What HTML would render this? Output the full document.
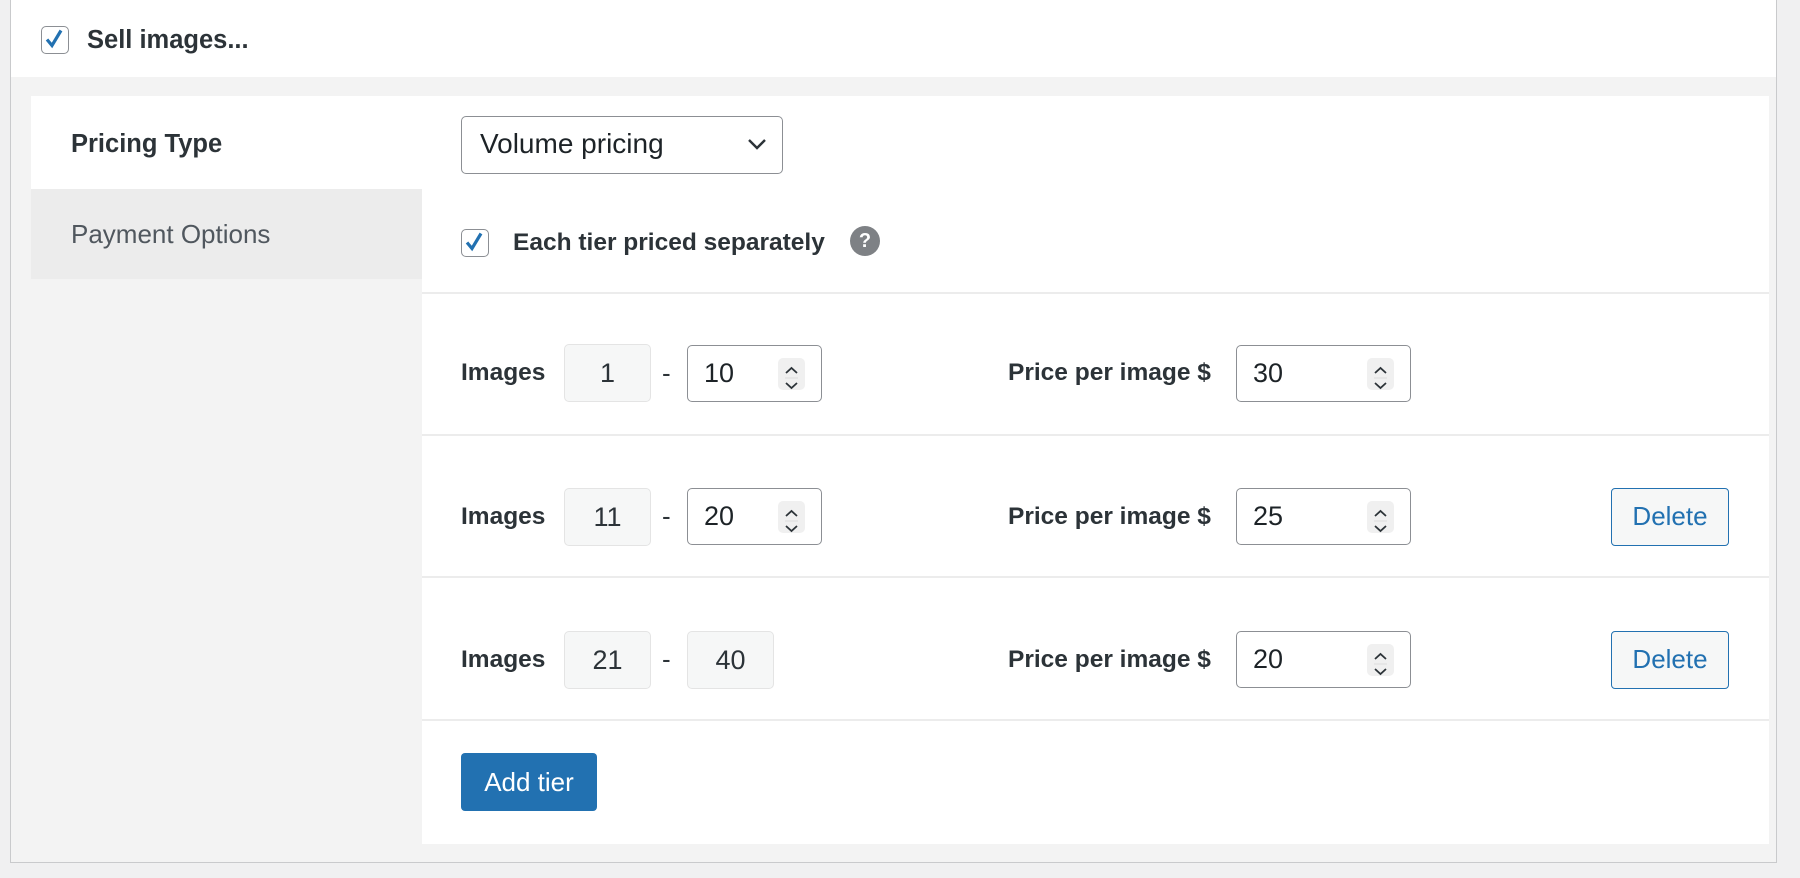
<!DOCTYPE html>
<html><head><meta charset="utf-8"><style>
body{margin:0;width:1800px;height:878px;background:#f0f0f1;position:relative;overflow:hidden;font-family:"Liberation Sans",Arial,sans-serif;color:#1d2327}
.a{position:absolute}
#outer{left:10px;top:0;width:1767px;height:863px;background:#f3f3f3;border:1px solid #c9cacc;border-top:none;box-sizing:border-box}
#hdr{left:11px;top:0;width:1765px;height:77px;background:#fff}
.cb{width:28px;height:28px;border:1.5px solid #8c8f94;border-radius:5px;box-sizing:border-box;background:#fff}
.lbl{font-weight:bold;font-size:24.5px;color:#2c3338;line-height:30px;white-space:nowrap}
.inp{border:1.5px solid #8c8f94;border-radius:5px;box-sizing:border-box;background:#fff;font-size:27px;line-height:54px;color:#1d2327}
.ro{border:1px solid #e4e4e4;border-radius:5px;box-sizing:border-box;background:#f6f7f7;font-size:27px;line-height:56px;text-align:center;color:#2c3338}
.sp{width:27px;height:32px;background:#f0f0f0;border-radius:5px}
.sep{left:422px;width:1347px;height:2px;background:#ececec}
.del{width:118px;height:58px;border:1.5px solid #2271b1;border-radius:4px;box-sizing:border-box;background:#f6f7f7;color:#2271b1;font-size:26px;line-height:55px;text-align:center}
</style></head><body>
<div class="a" id="outer"></div>
<div class="a" id="hdr"></div>
<div class="a cb" style="left:41px;top:26px"><svg width="26" height="26" viewBox="0 0 26 26" style="position:absolute;left:-1px;top:-1px"><path d="M6 13.5l5 6 9-15" fill="none" stroke="#2271b1" stroke-width="3.2"/></svg></div>
<div class="a lbl" style="left:87px;top:25px;font-size:25.5px">Sell images...</div>

<div class="a" style="left:31px;top:96px;width:1738px;height:748px;background:#fff"></div>
<div class="a" style="left:31px;top:189px;width:391px;height:655px;background:#f3f3f3"></div>
<div class="a" style="left:31px;top:189px;width:391px;height:90px;background:#ececec"></div>
<div class="a lbl" style="left:71px;top:129px;font-size:25.5px">Pricing Type</div>
<div class="a" style="left:71px;top:219px;font-size:26px;line-height:30px;color:#50575e">Payment Options</div>

<div class="a inp" style="left:461px;top:116px;width:322px;height:58px;padding-left:18px;font-size:28px">Volume pricing
<svg class="a" style="left:285px;top:20px" width="20" height="14" viewBox="0 0 20 14"><path d="M2 3l8 8 8-8" fill="none" stroke="#2c3338" stroke-width="2.4"/></svg></div>

<div class="a cb" style="left:461px;top:229px"><svg width="26" height="26" viewBox="0 0 26 26" style="position:absolute;left:-1px;top:-1px"><path d="M6 13.5l5 6 9-15" fill="none" stroke="#2271b1" stroke-width="3.2"/></svg></div>
<div class="a lbl" style="left:513px;top:228px">Each tier priced separately</div>
<div class="a" style="left:850px;top:226px;width:30px;height:30px;border-radius:50%;background:#7e8185;color:#fff;font-weight:bold;font-size:20px;line-height:30px;text-align:center">?</div>

<div class="a sep" style="top:292px"></div>
<div class="a sep" style="top:434px"></div>
<div class="a sep" style="top:576px"></div>
<div class="a sep" style="top:719px"></div>

<div class="a lbl" style="left:461px;top:358px">Images</div>
<div class="a ro" style="left:564px;top:344px;width:87px;height:58px">1</div>
<div class="a" style="left:662px;top:358px;font-size:26px;color:#2c3338">-</div>
<div class="a inp" style="left:687px;top:345px;width:135px;height:57px;padding-left:16px">10<div class="a sp" style="left:90px;top:12px"><svg width="27" height="32" viewBox="0 0 27 32"><path d="M8 11l5.5-5 5.5 5M8 21l5.5 5 5.5-5" fill="none" stroke="#2c3338" stroke-width="1.8"/><path d="M7 16h13" stroke="#ddd"/></svg></div></div>
<div class="a lbl" style="left:1008px;top:358px">Price per image&nbsp;$</div>
<div class="a inp" style="left:1236px;top:345px;width:175px;height:57px;padding-left:16px">30<div class="a sp" style="left:130px;top:12px"><svg width="27" height="32" viewBox="0 0 27 32"><path d="M8 11l5.5-5 5.5 5M8 21l5.5 5 5.5-5" fill="none" stroke="#2c3338" stroke-width="1.8"/><path d="M7 16h13" stroke="#ddd"/></svg></div></div>

<div class="a lbl" style="left:461px;top:502px">Images</div>
<div class="a ro" style="left:564px;top:488px;width:87px;height:58px">11</div>
<div class="a" style="left:662px;top:501px;font-size:26px;color:#2c3338">-</div>
<div class="a inp" style="left:687px;top:488px;width:135px;height:57px;padding-left:16px">20<div class="a sp" style="left:90px;top:12px"><svg width="27" height="32" viewBox="0 0 27 32"><path d="M8 11l5.5-5 5.5 5M8 21l5.5 5 5.5-5" fill="none" stroke="#2c3338" stroke-width="1.8"/><path d="M7 16h13" stroke="#ddd"/></svg></div></div>
<div class="a lbl" style="left:1008px;top:502px">Price per image&nbsp;$</div>
<div class="a inp" style="left:1236px;top:488px;width:175px;height:57px;padding-left:16px">25<div class="a sp" style="left:130px;top:12px"><svg width="27" height="32" viewBox="0 0 27 32"><path d="M8 11l5.5-5 5.5 5M8 21l5.5 5 5.5-5" fill="none" stroke="#2c3338" stroke-width="1.8"/><path d="M7 16h13" stroke="#ddd"/></svg></div></div>
<div class="a del" style="left:1611px;top:488px">Delete</div>

<div class="a lbl" style="left:461px;top:645px">Images</div>
<div class="a ro" style="left:564px;top:631px;width:87px;height:58px">21</div>
<div class="a" style="left:662px;top:644px;font-size:26px;color:#2c3338">-</div>
<div class="a ro" style="left:687px;top:631px;width:87px;height:58px">40</div>
<div class="a lbl" style="left:1008px;top:645px">Price per image&nbsp;$</div>
<div class="a inp" style="left:1236px;top:631px;width:175px;height:57px;padding-left:16px">20<div class="a sp" style="left:130px;top:12px"><svg width="27" height="32" viewBox="0 0 27 32"><path d="M8 11l5.5-5 5.5 5M8 21l5.5 5 5.5-5" fill="none" stroke="#2c3338" stroke-width="1.8"/><path d="M7 16h13" stroke="#ddd"/></svg></div></div>
<div class="a del" style="left:1611px;top:631px">Delete</div>

<div class="a" style="left:461px;top:753px;width:136px;height:58px;background:#2271b1;border-radius:4px;color:#fff;font-size:26px;line-height:58px;text-align:center">Add tier</div>
</body></html>
